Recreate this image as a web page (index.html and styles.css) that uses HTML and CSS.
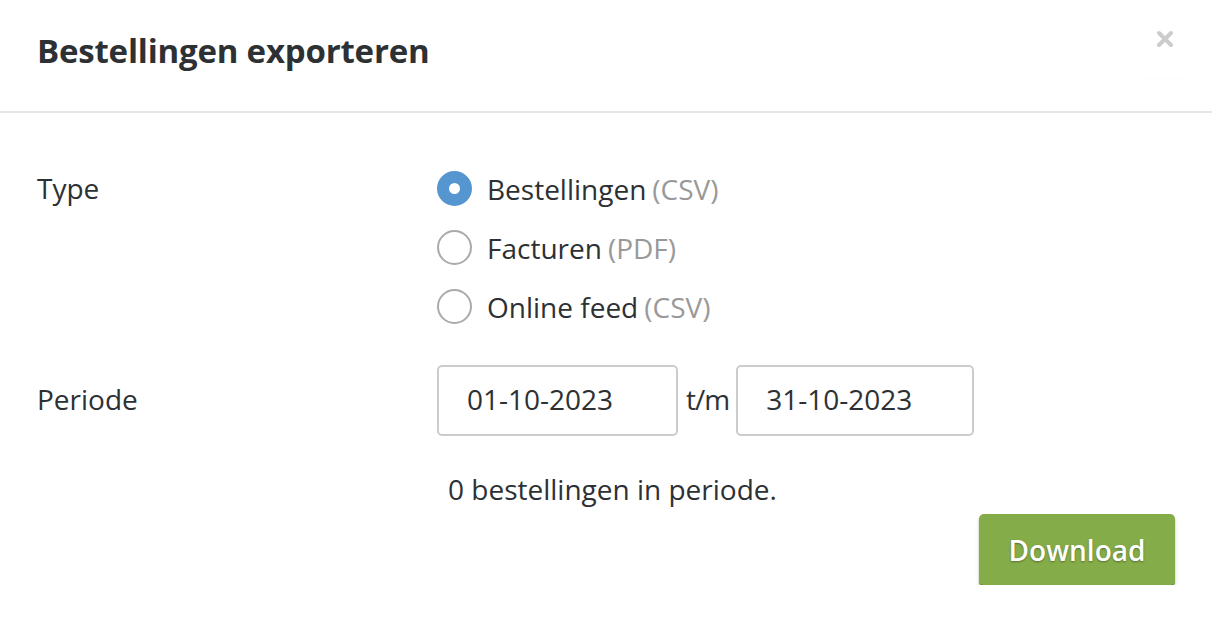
FILE: index.html
```html
<!DOCTYPE html>
<html lang="nl">

<head>
    <meta charset="UTF-8" />
    <title>Bestellingen exporteren</title>
    <link rel="stylesheet" href="styles.css">
</head>

<body>
    <div class="modal">
        <div class="modal-header">
            <h1>Bestellingen exporteren</h1>
            <button class="close" type="button">
                <svg width="18" height="18" viewBox="0 0 18 18">
                    <path d="M3 3 L15 15 M15 3 L3 15" stroke="#cccccc" stroke-width="4" stroke-linecap="round" />
                </svg>
            </button>
        </div>

        <form class="modal-body">
            <div class="form-row">
                <label class="row-label">Type</label>
                <div class="radios">
                    <label class="radio">
                        <input type="radio" name="type" checked />
                        <span class="dot"></span>
                        Bestellingen <span class="muted">(CSV)</span>
                    </label>
                    <label class="radio">
                        <input type="radio" name="type" />
                        <span class="dot"></span>
                        Facturen <span class="muted">(PDF)</span>
                    </label>
                    <label class="radio">
                        <input type="radio" name="type" />
                        <span class="dot"></span>
                        Online feed <span class="muted">(CSV)</span>
                    </label>
                </div>
            </div>

            <div class="form-row period-row">
                <label class="row-label">Periode</label>
                <div class="period">
                    <input class="date" value="01-10-2023" />
                    <span class="sep">t/m</span>
                    <input class="date date-end" value="31-10-2023" />
                </div>
            </div>

            <p class="count">0 bestellingen in periode.</p>

            <div class="actions">
                <button type="submit" class="btn-download">Download</button>
            </div>
        </form>
    </div>
</body>

</html>
```

FILE: styles.css
```css
/* Base */
* {
    box-sizing: border-box;
    margin: 0;
    padding: 0;
}

body {
    font-family: 'Open Sans', sans-serif;
    background-color: #fff;
    color: #2d3134;
    font-size: 28px;
}

/* Header */
.modal-header {
    height: 113px;
    display: flex;
    align-items: center;
    justify-content: space-between;
    padding: 0 26px 10px 37px;
    border-bottom: 2px solid #e6e6e6;
}

.modal-header h1 {
    font-size: 33px;
    font-weight: 700;
    letter-spacing: -0.2px;
}

.close {
    width: 43px;
    height: 64px;
    margin-top: -10px;
    border: none;
    background: #fff;
    border-radius: 6px;
    box-shadow: 0 1px 2px rgba(0, 0, 0, 0.02);
    display: flex;
    align-items: center;
    justify-content: center;
    padding-bottom: 14px;
}

/* Body */
.modal-body {
    padding: 46px 37px 0 37px;
}

.form-row {
    display: grid;
    grid-template-columns: 400px 1fr;
}

.row-label {
    line-height: 59px;
}

.radios {
    display: flex;
    flex-direction: column;
}

.radio {
    height: 59px;
    display: flex;
    align-items: center;
}

.radio input {
    display: none;
}

.radio .dot {
    width: 35px;
    height: 35px;
    border-radius: 50%;
    border: 2px solid #aaaaaa;
    margin-right: 15px;
    flex-shrink: 0;
}

.radio input:checked + .dot {
    border: 12px solid #5596d0;
    background-color: #fff;
}

.muted {
    color: #999;
    margin-left: 6px;
}

/* Period */
.period-row {
    margin-top: 29px;
}

.period-row .row-label {
    line-height: 68px;
}

.period {
    display: flex;
    align-items: center;
}

.date {
    width: 241px;
    height: 71px;
    border: 2px solid #cccccc;
    border-radius: 5px;
    padding: 0 28px 3px;
    font-family: inherit;
    font-size: 28px;
    color: #2d3134;
}

.date-end {
    width: 238px;
}

.sep {
    margin: 0 7px 0 8px;
    letter-spacing: -1px;
    padding-bottom: 3px;
}

.count {
    margin: 34px 0 0 411px;
}

.actions {
    display: flex;
    justify-content: flex-end;
    margin-top: 6px;
}

.btn-download {
    width: 196px;
    height: 71px;
    background-color: #84ac48;
    color: #fff;
    border: none;
    border-radius: 5px;
    box-shadow: 0 2px 1px #6d8f3a, 0 3px 4px rgba(0, 0, 0, 0.15);
    font-family: inherit;
    font-size: 28px;
    font-weight: 600;
    text-shadow: 0 1px 2px rgba(0, 0, 0, 0.35);
    cursor: pointer;
}
```
